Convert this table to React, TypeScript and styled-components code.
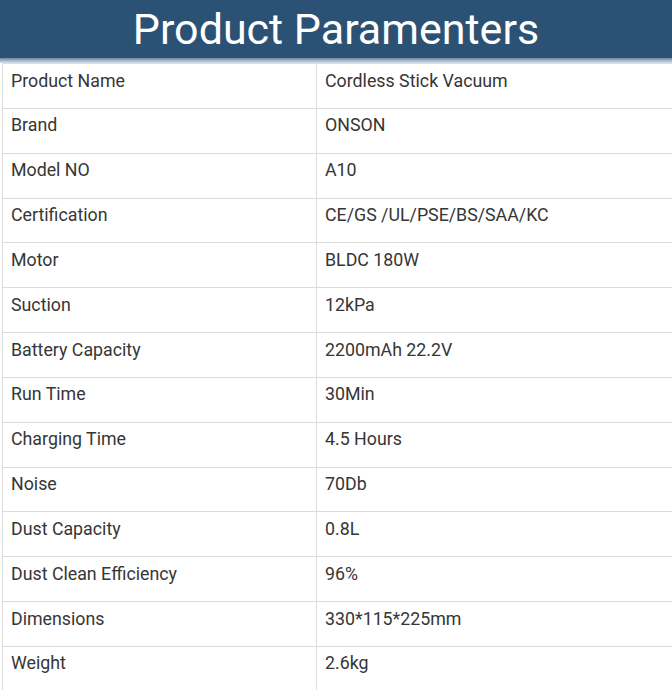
import styled, { createGlobalStyle } from "styled-components";

const Global = createGlobalStyle`
  html, body {
    margin: 0;
    padding: 0;
    background: #fff;
    font-family: Roboto, "Liberation Sans", sans-serif;
  }
`;

const Page = styled.div`
  width: 672px;
  height: 690px;
  overflow: hidden;
`;

const Header = styled.div`
  height: 58px;
  background: #2b5274;
  color: #fff;
  display: flex;
  align-items: center;
  justify-content: center;
  font-size: 43px;
  font-weight: 400;
  box-sizing: border-box;
`;

const Band = styled.div`
  height: 5px;
  background: linear-gradient(#6d88a1, #d9e0e7);
`;

const Table = styled.table`
  border-collapse: collapse;
  margin-left: 2px;
  width: 672px;
  table-layout: fixed;
`;

const Cell = styled.td<{ $first?: boolean }>`
  height: 44.85px;
  box-sizing: border-box;
  border: 1.5px solid #dcdcdc;
  padding: 5.5px 8px 0;
  vertical-align: top;
  font-size: 17.8px;
  color: #363636;
  width: ${(p) => (p.$first ? "314px" : "auto")};
`;

const rows: [string, string][] = [
  ["Product Name", "Cordless Stick Vacuum"],
  ["Brand", "ONSON"],
  ["Model NO", "A10"],
  ["Certification", "CE/GS /UL/PSE/BS/SAA/KC"],
  ["Motor", "BLDC 180W"],
  ["Suction", "12kPa"],
  ["Battery Capacity", "2200mAh 22.2V"],
  ["Run Time", "30Min"],
  ["Charging Time", "4.5 Hours"],
  ["Noise", "70Db"],
  ["Dust Capacity", "0.8L"],
  ["Dust Clean Efficiency", "96%"],
  ["Dimensions", "330*115*225mm"],
  ["Weight", "2.6kg"],
];

export default function App() {
  return (
    <Page>
      <Global />
      <Header>Product Paramenters</Header>
      <Band />
      <Table>
        <tbody>
          {rows.map(([k, v]) => (
            <tr key={k}>
              <Cell $first>{k}</Cell>
              <Cell>{v}</Cell>
            </tr>
          ))}
        </tbody>
      </Table>
    </Page>
  );
}
